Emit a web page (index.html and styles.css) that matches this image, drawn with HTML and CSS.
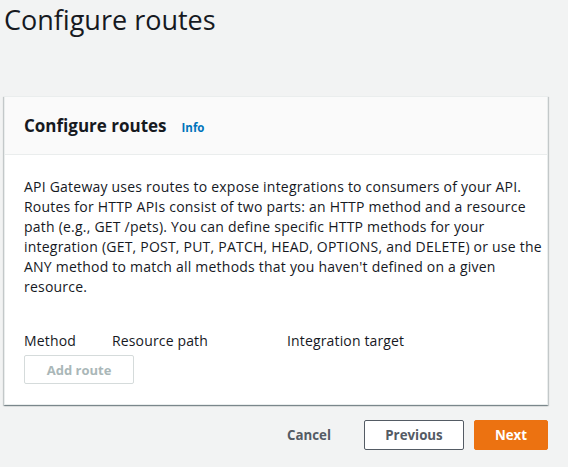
FILE: index.html
```html
<!DOCTYPE html>
<html>
<head>
<meta charset="utf-8">
<link rel="stylesheet" href="styles.css">
</head>
<body>
<div class="page">
  <h1 class="page-title">Configure routes</h1>
  <div class="card">
    <div class="card-header">
      <h2 class="card-title">Configure routes</h2>
      <a class="info">Info</a>
    </div>
    <div class="card-body">
      <p class="desc">API Gateway uses routes to expose integrations to consumers of your API. Routes for HTTP APIs consist of two parts: an HTTP method and a resource path (e.g., GET /pets). You can define specific HTTP methods for your integration (GET, POST, PUT, PATCH, HEAD, OPTIONS, and DELETE) or use the ANY method to match all methods that you haven't defined on a given resource.</p>
      <div class="cols">
        <span class="col-method">Method</span>
        <span class="col-path">Resource path</span>
        <span class="col-target">Integration target</span>
      </div>
      <button class="btn-add" disabled>Add route</button>
    </div>
  </div>
  <div class="actions">
    <button class="btn-cancel">Cancel</button>
    <button class="btn-prev">Previous</button>
    <button class="btn-next">Next</button>
  </div>
</div>
</body>
</html>
```
FILE: styles.css
```css
html, body {
  margin: 0;
  padding: 0;
  background: #f2f3f3;
  font-family: "Open Sans", "Noto Sans", sans-serif;
  color: #16191f;
}
.page {
  width: 568px;
  height: 467px;
  overflow: hidden;
}
.page-title {
  margin: 0;
  padding: 2px 0 0 4px;
  font-size: 27px;
  font-weight: 400;
  line-height: 36px;
  height: 94px;
  box-sizing: border-box;
}
.card {
  margin: 2px 0 0 4px;
  width: 544px;
  background: #fff;
  border: 1px solid #eaeded;
  box-shadow: 0 1px 1px 0 rgba(0,28,36,0.3), 1px 1px 1px 0 rgba(0,28,36,0.15), -1px 1px 1px 0 rgba(0,28,36,0.15);
  box-sizing: border-box;
}
.card-header {
  background: #fafafa;
  border-bottom: 1px solid #eaeded;
  height: 58px;
  box-sizing: border-box;
  display: flex;
  align-items: center;
  padding: 0 20px 0 19px;
}
.card-title {
  margin: 0;
  font-size: 17px;
  font-weight: 700;
  line-height: 22px;
}
.info {
  color: #0073bb;
  font-size: 11.5px;
  font-weight: 700;
  margin-left: 15px;
  margin-top: 3px;
}
.card-body {
  padding: 22px 20px 20px 19px;
}
.desc {
  margin: 0;
  width: 522px;
  font-size: 14px;
  line-height: 20px;
  letter-spacing: 0.22px;
}
.cols {
  margin-top: 34px;
  display: flex;
  font-size: 14px;
  line-height: 20px;
  letter-spacing: 0.15px;
}
.col-method { width: 88px; }
.col-path { width: 175px; }
.btn-add {
  margin-top: 4px;
  width: 110px;
  height: 29px;
  background: #fff;
  border: 1px solid #d5dbdb;
  border-radius: 2px;
  color: #aab7b8;
  font-family: inherit;
  font-weight: 700;
  font-size: 13px;
  padding: 0;
  display: block;
}
.actions {
  margin-top: 15px;
  width: 548px;
  display: flex;
  justify-content: flex-end;
  align-items: center;
  gap: 10px;
}
.actions button {
  font-family: inherit;
  font-weight: 700;
  font-size: 13.3px;
  height: 30px;
  border-radius: 2px;
  padding: 0;
}
.btn-cancel {
  background: transparent;
  border: none;
  color: #545b64;
  width: 70px;
  margin-right: 10px;
}
.btn-prev {
  width: 100px;
  background: #fff;
  border: 1px solid #545b64;
  color: #545b64;
}
.btn-next {
  width: 74px;
  background: #ec7211;
  border: 1px solid #ec7211;
  color: #fff;
}
```
